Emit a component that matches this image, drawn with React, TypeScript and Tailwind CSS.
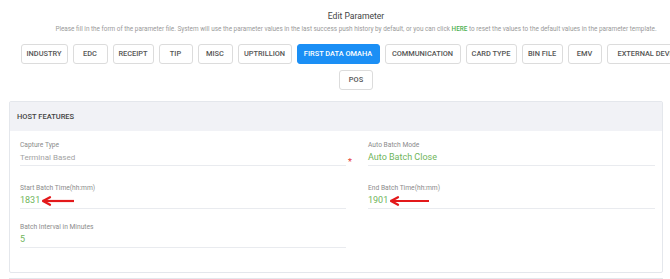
import React from 'react';

const tabs = [
  { name: 'INDUSTRY', w: 'w-[47px]' },
  { name: 'EDC', w: 'w-[35px]' },
  { name: 'RECEIPT', w: 'w-[41px]' },
  { name: 'TIP', w: 'w-[34px]' },
  { name: 'MISC', w: 'w-[35px]' },
  { name: 'UPTRILLION', w: 'w-[54px]' },
  { name: 'FIRST DATA OMAHA', w: 'w-[83px]', active: true },
  { name: 'COMMUNICATION', w: 'w-[76px]' },
  { name: 'CARD TYPE', w: 'w-[51px]' },
  { name: 'BIN FILE', w: 'w-[41px]' },
  { name: 'EMV', w: 'w-[34px]' },
  { name: 'EXTERNAL DEVICE', w: 'w-[85px]' },
  { name: 'POS', w: 'w-[34px]' },
];

function Arrow({ width }: { width: number }) {
  return (
    <svg width={width} height="10" viewBox={`0 0 ${width} 10`} className="ml-[2px]">
      <path d={`M2 5 L${width - 1} 5`} stroke="#e3191b" strokeWidth="2.2" />
      <path d="M1 5 L8 1.2 M1 5 L8 8.8" stroke="#e3191b" strokeWidth="2.2" strokeLinecap="round" fill="none" />
    </svg>
  );
}

function Field({ label, value, grey, arrow, className = '', children }: any) {
  return (
    <div className={`relative border-b border-[#e9ebef] pb-[1px] ${className}`}>
      <div className="text-[6.7px] leading-[9px] text-[#8c8c8c]">{label}</div>
      <div className={`mt-[1px] flex items-center leading-[13px] ${grey ? 'text-[8px] text-[#a3a3a3]' : 'text-[9px] text-[#6fb55c]'}`}>
        {value}
        {arrow ? <Arrow width={arrow} /> : null}
      </div>
      {children}
    </div>
  );
}

export default function App() {
  return (
    <div className="w-[670px] h-[279px] overflow-hidden bg-white" style={{ fontFamily: 'Roboto, "Liberation Sans", sans-serif' }}>
      <div className="w-[712px]">
        <div className="pt-[11px] text-center text-[8.6px] leading-[11px] text-[#444]">Edit Parameter</div>
        <div className="mt-[3px] text-center text-[6.4px] leading-[8px] text-[#9a9a9a] whitespace-nowrap">
          Please fill in the form of the parameter file. System will use the parameter values in the last success push history by default, or you can click{' '}
          <span className="text-[#4caf50] font-medium">HERE</span> to reset the values to the default values in the parameter template.
        </div>
        <div className="mx-auto mt-[11px] w-[690px] flex flex-wrap justify-center gap-x-[5px] gap-y-[6px]">
          {tabs.map((t) => (
            <div
              key={t.name}
              className={`${t.w} h-[20px] flex items-center justify-center rounded-[3px] border text-[7.4px] font-medium whitespace-nowrap ${
                t.active ? 'bg-[#1b8ff5] border-[#1b8ff5] text-white' : 'bg-white border-[#dcdcdc] text-[#555]'
              }`}
            >
              {t.name}
            </div>
          ))}
        </div>
      </div>

      <div className="ml-[9px] mt-[11px] w-[654px] border border-[#e4e7ec] rounded-[2px]">
        <div className="h-[29px] bg-[#f1f2f6] flex items-center pl-[7px] text-[7.5px] font-medium text-[#444]">HOST FEATURES</div>
        <div className="pl-[10px] pt-[10px] pb-[24px] grid grid-cols-[326px_287px] gap-x-[22px] items-start">
          <Field label="Capture Type" value="Terminal Based" grey className="mb-[18px]" />
          <Field label="Auto Batch Mode" value="Auto Batch Close" className="mb-[17px]">
            <span className="absolute left-[-20px] top-[15px] text-[9px] text-[#e53935]">*</span>
          </Field>
          <Field label="Start Batch Time(hh:mm)" value="1831" arrow={33} className="mb-[14px]" />
          <Field label="End Batch Time(hh:mm)" value="1901" arrow={40} />
          <Field label="Batch Interval in Minutes" value="5" />
          <div />
        </div>
      </div>
      <div className="ml-[9px] mt-[5px] w-[654px] border-t border-[#e4e7ec]" />
    </div>
  );
}
